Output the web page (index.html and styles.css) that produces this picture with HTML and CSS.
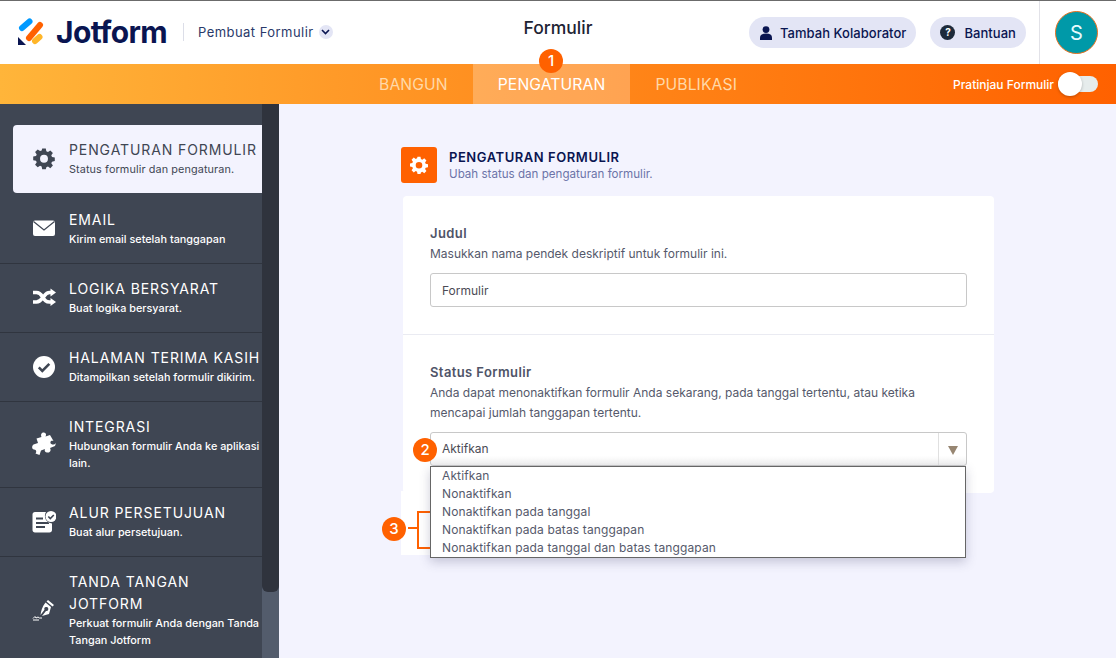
FILE: index.html
```html
<!DOCTYPE html>
<html lang="id">
<head>
  <meta charset="UTF-8" />
  <title>Formulir</title>
  <link rel="stylesheet" href="styles.css">
</head>
<body>
  <header class="topbar">
    <div class="brand">
      <svg class="logo" width="30" height="30" viewBox="0 0 30 30">
        <path d="M5 11L12.500 4.500" stroke="#0099ff" stroke-width="6" stroke-linecap="round"/>
        <path d="M12 21L23 8" stroke="#ff6100" stroke-width="6" stroke-linecap="round"/>
        <path d="M18 24L22.500 20" stroke="#ffb629" stroke-width="6" stroke-linecap="round"/>
        <path d="M1 20V28H9Z" fill="#0a1551"/>
      </svg>
      <span class="wordmark">Jotform</span>
      <span class="brand-sep"></span>
      <span class="builder">Pembuat Formulir</span>
      <span class="chev">
        <svg width="9" height="6" viewBox="0 0 9 6"><path d="M1 1l3.500 3.500L8 1" fill="none" stroke="#0a1551" stroke-width="1.600"/></svg>
      </span>
    </div>
    <div class="title">Formulir</div>
    <div class="actions">
      <button class="pill">
        <svg width="14" height="14" viewBox="0 0 14 14"><circle cx="7" cy="3.600" r="3.400" fill="#0a1551"/><path d="M1 14v-2.200C1 9 3 7.600 7 7.600s6 1.400 6 4.200V14z" fill="#0a1551"/></svg>
        Tambah Kolaborator
      </button>
      <button class="pill pill-help">
        <span class="help-icon">?</span>
        Bantuan
      </button>
      <div class="avatar-cell"><span class="avatar">S</span></div>
    </div>
  </header>

  <nav class="tabs">
    <a class="tab">BANGUN</a>
    <a class="tab active">PENGATURAN</a>
    <a class="tab">PUBLIKASI</a>
    <div class="preview">
      <span>Pratinjau Formulir</span>
      <span class="switch"><span class="knob"></span></span>
    </div>
  </nav>

  <div class="main">
    <aside class="sidebar">
      <div class="side-items">
        <div class="side-item active">
          <svg class="side-icon" width="24" height="24" viewBox="0 0 24 24"><path class="gear" fill-rule="evenodd" d="M10 1h4l.6 3.100 1.800.8L19 3.100 21.900 6l-1.800 2.600.8 1.800L24 11v4l-3.100.6-.8 1.800 1.800 2.600-2.900 2.900-2.600-1.800-1.800.8L14 24h-4l-.6-3.100-1.800-.8L5 21.900 2.100 19l1.800-2.600-.8-1.800L0 14v-4l3.100-.6.8-1.800L2.100 5 5 2.100l2.600 1.800 1.800-.8zM12 8a4.400 4.400 0 1 0 0 8.800 4.400 4.400 0 0 0 0-8.800z" transform="translate(1.200 .6) scale(.9)"/></svg>
          <div class="side-text">
            <div class="side-title">PENGATURAN FORMULIR</div>
            <div class="side-desc">Status formulir dan pengaturan.</div>
          </div>
        </div>
        <div class="side-item">
          <svg class="side-icon" width="24" height="24" viewBox="0 0 24 24"><rect x="1" y="3.500" width="22" height="15.500" rx="2" fill="#fff"/><path d="M1.500 4.500L12 13l10.500-8.500" fill="none" stroke="#3f4653" stroke-width="1.200"/></svg>
          <div class="side-text">
            <div class="side-title">EMAIL</div>
            <div class="side-desc">Kirim email setelah tanggapan</div>
          </div>
        </div>
        <div class="side-item">
          <svg class="side-icon" width="24" height="24" viewBox="0 0 24 24"><path d="M1 6.500H4.500C8 6.500 9 8.500 11 11.500s3 4.500 6.500 4.500H19M1 16H4.500C8 16 9 14 11 11.500S14 6.500 17.500 6.500H19" fill="none" stroke="#fff" stroke-width="3.600"/><path d="M18.500 2.500L24 6.500 18.500 10.500zM18.500 12L24 16 18.500 20z" fill="#fff"/></svg>
          <div class="side-text">
            <div class="side-title">LOGIKA BERSYARAT</div>
            <div class="side-desc">Buat logika bersyarat.</div>
          </div>
        </div>
        <div class="side-item">
          <svg class="side-icon" width="24" height="24" viewBox="0 0 24 24"><circle cx="12" cy="12" r="11" fill="#fff"/><path d="M6.800 12.300l3.500 3.500 7-7" fill="none" stroke="#3f4653" stroke-width="2.600"/></svg>
          <div class="side-text">
            <div class="side-title">HALAMAN TERIMA KASIH</div>
            <div class="side-desc">Ditampilkan setelah formulir dikirim.</div>
          </div>
        </div>
        <div class="side-item">
          <svg class="side-icon" width="24" height="24" viewBox="0 0 24 24"><path d="M10 1c3-1.500 5 1 3.500 3.500L18 3l3.500 6c-2-.8-3.500.2-3 2 .5 1.500 2.500 2 4.500 1l1-1-1 3-5 2c1.500 2.500 0 5-3 4.500-2-.4-2.800-2-2-3.500L9 18.500 7.500 23l-4-1.500c1.500-2 .5-4-1.500-4S-.5 14.500 1 13l.5-.5L6 11 4.500 6.500 9.500 5C8.800 3.500 8.800 2 10 1z" fill="#fff"/></svg>
          <div class="side-text">
            <div class="side-title">INTEGRASI</div>
            <div class="side-desc">Hubungkan formulir Anda ke aplikasi lain.</div>
          </div>
        </div>
        <div class="side-item">
          <svg class="side-icon" width="24" height="24" viewBox="0 0 24 24"><path d="M3 2h11a7.500 7.500 0 0 0 6 11.400V20c0 1.500-1 2.500-2.500 2.500H3c-1.500 0-2.500-1-2.500-2.500V4.500C.5 3 1.500 2 3 2zM4 7.500v2h7v-2zm0 4.500v2h13v-2zm0 4v2h9v-2z" fill="#fff" fill-rule="evenodd"/><circle cx="19" cy="6.500" r="5.500" fill="#fff"/><path d="M16.300 6.500l2 2 3.500-3.500" fill="none" stroke="#3f4653" stroke-width="1.600"/></svg>
          <div class="side-text">
            <div class="side-title">ALUR PERSETUJUAN</div>
            <div class="side-desc">Buat alur persetujuan.</div>
          </div>
        </div>
        <div class="side-item">
          <svg class="side-icon" width="24" height="24" viewBox="0 0 24 24"><path d="M16 2l6 5-1.500 1.500-6-5zM13.500 4.500l5.500 4.500-2 7-7 2 4-5a2 2 0 1 0-1.500-1.200l-4 5.200c.5-4 1.500-8 5-12.500z" fill="#fff"/><path d="M1 20.500l2-2 1 1.500 2-1 1.500 1H10M1 22h6" fill="none" stroke="#fff" stroke-width="1"/></svg>
          <div class="side-text">
            <div class="side-title">TANDA TANGAN<br>JOTFORM</div>
            <div class="side-desc">Perkuat formulir Anda dengan Tanda Tangan Jotform</div>
          </div>
        </div>
      </div>
      <div class="scrollbar"><div class="scroll-thumb"></div></div>
    </aside>

    <section class="content">
      <div class="content-inner">
        <div class="page-head">
          <span class="head-icon">
            <svg width="18" height="18" viewBox="0 0 24 24"><path fill="#fff" fill-rule="evenodd" d="M10 1h4l.6 3.100 1.800.8L19 3.100 21.900 6l-1.800 2.600.8 1.800L24 11v4l-3.100.6-.8 1.800 1.800 2.600-2.900 2.900-2.600-1.800-1.800.8L14 24h-4l-.6-3.100-1.800-.8L5 21.900 2.100 19l1.800-2.600-.8-1.800L0 14v-4l3.100-.6.8-1.800L2.100 5 5 2.100l2.600 1.800 1.800-.8zM12 8a4.400 4.400 0 1 0 0 8.800 4.400 4.400 0 0 0 0-8.800z"/></svg>
          </span>
          <div class="head-text">
            <div class="head-title">PENGATURAN FORMULIR</div>
            <div class="head-desc">Ubah status dan pengaturan formulir.</div>
          </div>
        </div>

        <div class="card">
          <div class="field field-title">
            <div class="label">Judul</div>
            <div class="help">Masukkan nama pendek deskriptif untuk formulir ini.</div>
            <div class="input">Formulir</div>
          </div>
          <div class="field field-status">
            <div class="label">Status Formulir</div>
            <div class="help">Anda dapat menonaktifkan formulir Anda sekarang, pada tanggal tertentu, atau ketika mencapai jumlah tanggapan tertentu.</div>
            <div class="select">
              <span class="select-value">Aktifkan</span>
              <span class="select-arrow"><i></i></span>
              <ul class="dropdown">
                <li>Aktifkan</li>
                <li>Nonaktifkan</li>
                <li>Nonaktifkan pada tanggal</li>
                <li>Nonaktifkan pada batas tanggapan</li>
                <li>Nonaktifkan pada tanggal dan batas tanggapan</li>
              </ul>
              <span class="badge badge-two">2</span>
              <div class="white-patch"></div>
              <div class="bracket"></div>
              <span class="bracket-tick"></span>
              <span class="badge badge-three">3</span>
            </div>
          </div>
        </div>
      </div>
    </section>
  </div>

  <span class="badge badge-one">1</span>
</body>
</html>
```

FILE: styles.css
```css
* { box-sizing: border-box; }
html, body { height: 100%; }
body {
  margin: 0;
  height: 658px;
  overflow: hidden;
  position: relative;
  display: flex;
  flex-direction: column;
  font-family: "Inter", "Noto Sans", sans-serif;
  background: #f3f3fe;
  color: #0a1551;
}

/* top header */
.topbar {
  height: 64px;
  flex: none;
  background: #fff;
  border-top: 1px solid #6b6b6b;
  display: flex;
  align-items: center;
  position: relative;
}
.brand {
  display: flex;
  align-items: center;
  padding-left: 17px;
  margin-top: -1px;
}
.logo { margin-right: 9px; }
.wordmark {
  font-size: 30px;
  font-weight: 700;
  letter-spacing: -0.65px;
  color: #0a1551;
  width: 113px;
}
.brand-sep {
  width: 1px;
  height: 18px;
  background: #dcdee8;
  margin: 0 14px 0 14px;
}
.builder {
  font-size: 13px;
  color: #2a3a6a;
  letter-spacing: 0.45px;
}
.chev {
  width: 14px;
  height: 14px;
  border-radius: 50%;
  background: #e3e5f5;
  margin-left: 5px;
  display: flex;
  align-items: center;
  justify-content: center;
}
.title {
  position: absolute;
  left: 0;
  width: 1116px;
  top: 16px;
  text-align: center;
  font-size: 17.5px;
  font-weight: 500;
  color: #1d2333;
}
.actions {
  margin-left: auto;
  display: flex;
  align-items: center;
  height: 100%;
}
.pill {
  height: 31px;
  border: 0;
  border-radius: 16px;
  background: #e3e5f5;
  font: 500 13px "Inter", sans-serif;
  letter-spacing: 0.05px;
  color: #0a1551;
  display: flex;
  align-items: center;
  gap: 7px;
  padding: 0 10px 0 10px;
  margin-left: 14px;
}
.help-icon {
  width: 15px;
  height: 15px;
  border-radius: 50%;
  background: #1d2a3a;
  color: #fff;
  font-size: 10px;
  font-weight: 700;
  line-height: 15px;
  text-align: center;
}
.pill-help { gap: 9px; }
.avatar-cell {
  width: 77px;
  height: 100%;
  margin-left: 13px;
  border-left: 1px solid #e2e2e8;
  padding-right: 3px;
  display: flex;
  align-items: center;
  justify-content: center;
}
.avatar {
  width: 43px;
  height: 43px;
  border-radius: 50%;
  background: #0099a8;
  border: 1px solid #e9711e;
  color: #e8fbfd;
  font-size: 20px;
  display: flex;
  align-items: center;
  justify-content: center;
}

/* orange tab strip */
.tabs {
  height: 40px;
  flex: none;
  background: linear-gradient(90deg, #ffb53a 0%, #ff9a28 30%, #ff7a10 70%, #ff6100 100%);
  display: flex;
  justify-content: center;
  position: relative;
}
.tab {
  font-size: 15.7px;
  line-height: 40px;
  padding: 1px 25px 0;
  color: #ffd9a8;
  letter-spacing: 0.1px;
}
.tab.active {
  background: rgba(255, 255, 255, 0.25);
  color: #fff;
}
.preview {
  position: absolute;
  right: 18px;
  top: 0;
  height: 40px;
  display: flex;
  align-items: center;
  gap: 4px;
  color: #fff;
  font-size: 12px;
  font-weight: 500;
}
.switch {
  width: 40px;
  height: 16px;
  border-radius: 8px;
  background: #e6ecec;
  position: relative;
}
.knob {
  position: absolute;
  left: 0;
  top: -4px;
  width: 24px;
  height: 24px;
  border-radius: 50%;
  background: #fff;
  box-shadow: 0 1px 3px rgba(0, 0, 0, 0.25);
}

/* main area */
.main {
  flex: 1;
  display: flex;
  min-height: 0;
}
.sidebar {
  width: 279px;
  flex: none;
  background: #3f4653;
  display: flex;
  overflow: hidden;
}
.side-items {
  width: 262px;
  flex: none;
  padding-top: 21px;
}
.scrollbar {
  width: 17px;
  background: #535c6c;
}
.scroll-thumb {
  height: 488px;
  background: #2f333d;
  border-radius: 0 0 6px 6px;
}
.side-item {
  display: flex;
  align-items: center;
  padding: 14px 0 15px 32px;
  gap: 13px;
  color: #fff;
  border-bottom: 1px solid #30353f;
  min-height: 69px;
}
.side-item.active {
  margin-left: 13px;
  padding-left: 19px;
  height: 68px;
  min-height: 68px;
  margin-bottom: 2px;
  background: #f3f3fe;
  border-radius: 4px 0 0 4px;
  border-bottom: 0;
  color: #3f4653;
}
.side-icon { flex: none; }
.gear { fill: #3f4653; }
.side-text { min-width: 0; }
.side-title {
  font-size: 14px;
  line-height: 22px;
  letter-spacing: 0.9px;
  white-space: nowrap;
}
.side-desc {
  font-size: 10.85px;
  line-height: 17px;
  font-weight: 500;
}
.side-item.active .side-desc {
  font-weight: 400;
  letter-spacing: 0.1px;
}

/* content */
.content {
  flex: 1;
  min-width: 0;
}
.content-inner {
  width: 593px;
  margin-left: 122px;
  padding-top: 43px;
}
.page-head {
  display: flex;
  align-items: center;
  gap: 12px;
  margin-bottom: 13px;
}
.head-icon {
  width: 36px;
  height: 36px;
  border-radius: 3px;
  background: #ff6100;
  display: flex;
  align-items: center;
  justify-content: center;
}
.head-text { margin-top: 2px; }
.head-title {
  font-size: 13px;
  line-height: 15px;
  font-weight: 600;
  letter-spacing: 0.55px;
  color: #0a1551;
}
.head-desc {
  font-size: 11.6px;
  line-height: 15px;
  margin-top: 2px;
  color: #6c73a8;
}
.card {
  background: #fff;
  margin-left: 2px;
  border-radius: 4px;
  width: 591px;
  height: 297px;
}
.field { padding: 0 27px; }
.field-title {
  padding-top: 28px;
  height: 139px;
  border-bottom: 1px solid #eaebf2;
}
.field-status { padding-top: 28px; }
.label {
  font-size: 13px;
  line-height: 18px;
  font-weight: 600;
  letter-spacing: 0.4px;
  color: #4f5468;
}
.help {
  font-size: 12px;
  line-height: 20px;
  color: #55596b;
  margin-top: 2px;
}
.input {
  margin-top: 9px;
  height: 34px;
  border: 1px solid #c8c8c8;
  border-radius: 3px;
  font-size: 12px;
  line-height: 33px;
  padding-left: 11px;
  color: #4b4b55;
}
.select {
  position: relative;
  margin-top: 9px;
  height: 34px;
  border: 1px solid #c8c8c8;
  border-radius: 3px;
  background: linear-gradient(#fff 70%, #f0f0f0);
  font-size: 12px;
  line-height: 32px;
  color: #4b4b55;
  display: flex;
  justify-content: space-between;
}
.select-value { padding-left: 11px; }
.select-arrow {
  width: 28px;
  border-left: 1px solid #e0e0e0;
  position: relative;
}
.select-arrow i {
  position: absolute;
  left: 9px;
  top: 13px;
  border-left: 5px solid transparent;
  border-right: 5px solid transparent;
  border-top: 9px solid #978672;
}
.dropdown {
  position: absolute;
  left: -1px;
  top: 33px;
  width: 536px;
  height: 92px;
  margin: 0;
  padding: 0 0 0 11px;
  list-style: none;
  background: #fff;
  border: 1px solid #666;
  box-shadow: 0 4px 10px rgba(60, 60, 100, 0.25);
  z-index: 3;
}
.dropdown li {
  font-size: 12px;
  line-height: 18px;
  letter-spacing: 0.12px;
  color: #55596b;
}
.badge {
  position: absolute;
  width: 24px;
  height: 24px;
  border-radius: 50%;
  background: #ff6100;
  color: #fff;
  font-size: 15px;
  font-weight: 500;
  line-height: 24px;
  text-align: center;
  z-index: 5;
}
.badge-one { left: 539px; top: 49px; }
.badge-two { left: -18px; top: 5px; }
.badge-three { left: -49px; top: 84px; }
.white-patch {
  position: absolute;
  left: -30px;
  top: 58px;
  width: 31px;
  height: 64px;
  background: #fff;
}
.bracket {
  position: absolute;
  left: -14px;
  top: 78px;
  width: 15px;
  height: 38px;
  border: 2px solid #ff6100;
  border-right: 0;
  z-index: 2;
}
.bracket-tick {
  position: absolute;
  left: -23px;
  top: 94px;
  width: 9px;
  height: 2px;
  background: #ff6100;
  z-index: 2;
}
```
